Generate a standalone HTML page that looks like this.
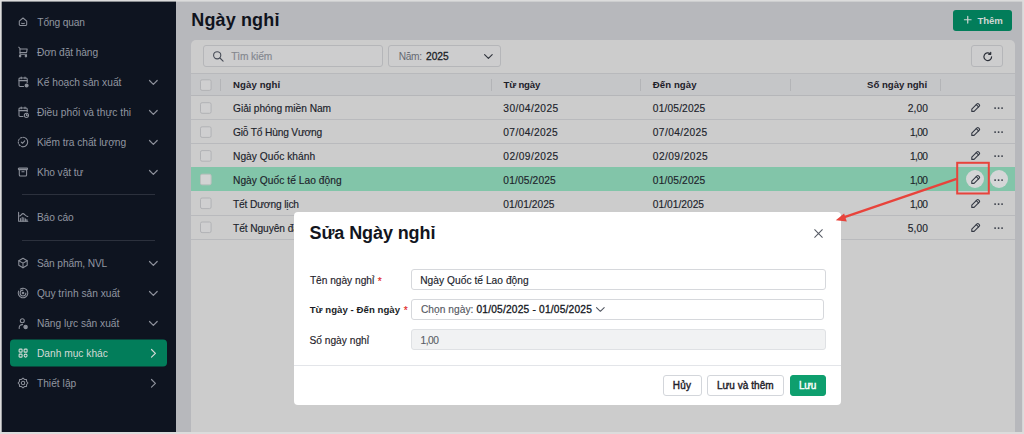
<!DOCTYPE html>
<html lang="vi">
<head>
<meta charset="utf-8">
<title>Ngày nghỉ</title>
<style>
*{box-sizing:border-box;margin:0;padding:0}
html,body{width:1024px;height:434px;overflow:hidden}
body{font-family:"Liberation Sans",sans-serif;font-size:10.2px;color:#1b1e26;background:#b7b8bc;position:relative}
.a{position:absolute}
.t{position:absolute;line-height:16px;white-space:nowrap;font-size:10.2px;color:#20232b;-webkit-text-stroke:.15px}
.edge{position:absolute;background:#dcdcdc}
.side{position:absolute;left:0;top:0;width:176px;height:434px;background:#0e1420}
.sm{color:#9196a0;-webkit-text-stroke:0}
.act{position:absolute;left:10px;top:340px;width:157px;height:26.5px;border-radius:4px;background:#027d5a}
.hr{position:absolute;left:22px;width:133px;height:1px;background:#2c313d}
svg{position:absolute;overflow:visible}
.ic{fill:none;stroke:#8d919b;stroke-width:1.05;stroke-linecap:round;stroke-linejoin:round}
.ch{fill:none;stroke:#8d919b;stroke-width:1.2;stroke-linecap:round;stroke-linejoin:round}
.w{stroke:#d4dad7}
.h1{-webkit-text-stroke:0;font-size:18px;font-weight:bold;line-height:24px;color:#10131c}
.btn-add{position:absolute;left:953px;top:9.5px;width:59px;height:21px;border-radius:3px;background:#027d5a}
.card{position:absolute;left:191px;top:39.5px;width:824px;height:400px;background:#cccccc;border-radius:5px 5px 0 0}
.box{position:absolute;height:21.5px;top:45px;border:1px solid #b5b6b9;border-radius:3px;background:#cdcdce}
.thead{position:absolute;left:191px;top:73px;width:824px;height:23px;background:#c5c6c8;border-top:1px solid #b8b9bc;border-bottom:1px solid #b5b6b9}
.rl{position:absolute;left:191px;width:824px;height:1px;background:#b9babd}
.sel{position:absolute;left:191px;top:167.2px;width:824px;height:23.8px;background:#82c5a9}
.cb{position:absolute;left:200px;width:11.5px;height:11.5px;border:1px solid #b3b4b7;border-radius:2px;background:#cfcfd0}
.sep{position:absolute;top:79px;width:1px;height:12px;background:#b3b4b7}
.hb{font-weight:bold;font-size:9.6px;color:#1d2028;-webkit-text-stroke:0}
.pen{fill:none;stroke:#343944;stroke-width:1.100;stroke-linecap:round;stroke-linejoin:round}
.dots{fill:#343944}
.circ{position:absolute;width:18px;height:18px;border-radius:50%;background:#d5d6d7}
.modal{position:absolute;left:294.3px;top:212.2px;width:546.4px;height:192.8px;background:#fff;border-radius:4px}
.h2{-webkit-text-stroke:0;font-size:18px;font-weight:bold;line-height:24px;color:#12151d}
.lb{color:#1f222a}
.lbb{font-weight:bold;font-size:9.6px;color:#1a1d25;-webkit-text-stroke:0}
.red{color:#e02424}
.fi{position:absolute;left:411px;width:415px;height:21px;border:1px solid #d6d8dc;border-radius:3px;background:#fff}
.dis{background:#f1f2f3;border-color:#dfe1e4}
.mline{position:absolute;left:294.3px;top:364.8px;width:546.4px;height:1px;background:#e3e5e9}
.b{position:absolute;top:375px;height:21px;border:1px solid #d3d6db;border-radius:3px;background:#fff}
.g{background:#0e9f6e;border-color:#0e9f6e}
.bt{font-size:10px;color:#1f222a;-webkit-text-stroke:.4px}
</style>
</head>
<body>
<div class="side"></div>
<svg style="left:0;top:0" width="176" height="434" viewBox="0 0 176 434"><rect x="10" y="339.600" width="157" height="26.800" rx="4" fill="#027d5a"/></svg>
<div class="hr" style="top:194px"></div>
<div class="hr" style="top:240px"></div>

<!-- sidebar icons -->
<svg class="ic" style="left:17.2px;top:15.5px" width="12" height="12" viewBox="0 0 12 12"><path d="M2.300 5.100 6 2l3.700 3.100v3.500a.9.9 0 0 1-.9.9H3.200a.9.9 0 0 1-.9-.9z"/><path d="M4.600 7.300q1.400.8 2.800 0"/></svg>
<svg class="ic" style="left:17.2px;top:46.2px" width="12" height="12" viewBox="0 0 12 12"><path d="M1.700 1.200 3 2.500v5.700h6.600"/><path d="M3 3h7.200l-.600 3.400H3"/><circle cx="3.100" cy="10.100" r=".75"/><circle cx="8.900" cy="10.100" r=".75"/></svg>
<svg class="ic" style="left:17.2px;top:75.7px" width="12" height="12" viewBox="0 0 12 12"><path d="M6.600 10.400H3a1 1 0 0 1-1-1V2.900a1 1 0 0 1 1-1h6.200a1 1 0 0 1 1 1v3.500"/><path d="M2 4.600h8.200M4.200 .9v1.800M8 .9v1.800"/><circle cx="9.600" cy="9.400" r="1.500" fill="#8d919b"/></svg>
<svg class="ic" style="left:17.2px;top:105.7px" width="12" height="12" viewBox="0 0 12 12"><path d="M6 10.400H3a1 1 0 0 1-1-1V2.900a1 1 0 0 1 1-1h6.200a1 1 0 0 1 1 1v2.800"/><path d="M2 4.600h8.200M4.200 .9v1.800M8 .9v1.800"/><circle cx="9.400" cy="9.300" r="2.100"/><path d="M9.400 8.300v1.100h.9"/></svg>
<svg class="ic" style="left:17.2px;top:136.0px" width="12" height="12" viewBox="0 0 12 12"><path d="M6 1.300a4.700 4.700 0 0 1 0 9.400"/><path d="M6 10.700a4.700 4.700 0 0 1 0-9.400" stroke-dasharray="1.500 1.450"/><path d="M4.300 6.100l1.200 1.200 2.200-2.400"/></svg>
<svg class="ic" style="left:17.2px;top:166.3px" width="12" height="12" viewBox="0 0 12 12"><rect x="1.400" y="2.100" width="9.100" height="1.500" rx=".5"/><path d="M2.300 3.700V9a1 1 0 0 0 1 1h5.300a1 1 0 0 0 1-1V3.700"/><path d="M4.900 5.800h2.200"/></svg>
<svg class="ic" style="left:17.2px;top:211.0px" width="12" height="12" viewBox="0 0 12 12"><path d="M1.600 1.200v9.100h9.200"/><path d="M2.600 5c1.400-.4 2-2.400 3.400-2.400s2.600 2.800 4.800 3"/><path d="M3.600 10V7.400M5.200 10V6.200M6.800 10V6.800M8.400 10V7.800M9.900 10V8.400"/></svg>
<svg class="ic" style="left:17.2px;top:257.4px" width="12" height="12" viewBox="0 0 12 12"><path d="M6 1.300l4.200 2.400v4.600L6 10.700 1.800 8.300V3.700z"/><path d="M1.800 3.700 6 6.100l4.200-2.400M6 6.100v4.600"/></svg>
<svg class="ic" style="left:17.2px;top:287.4px" width="12" height="12" viewBox="0 0 12 12"><path d="M6 1.200a4.800 4.800 0 1 1-4.400 2.900"/><path d="M8.900 6A2.900 2.900 0 1 1 6 3.100"/><circle cx="6" cy="6" r=".8"/><path d="M3.300 2.100a4.800 4.800 0 0 1 2.700-.9"/></svg>
<svg class="ic" style="left:17.2px;top:317.8px" width="12" height="12" viewBox="0 0 12 12"><circle cx="5.300" cy="2.800" r="2"/><path d="M2.200 10.400v-.8a3 3 0 0 1 3-3h.4"/><circle cx="8.600" cy="8.900" r="1.700" fill="#8d919b"/></svg>
<svg class="ic w" style="left:17.2px;top:347.2px" width="12" height="12" viewBox="0 0 12 12"><rect x="2.100" y="2.100" width="3" height="3" rx=".7"/><rect x="7.100" y="2.100" width="3" height="3" rx=".7"/><rect x="2.100" y="7.100" width="3" height="3" rx=".7"/><rect x="7.100" y="7.100" width="3" height="3" rx="1.500"/></svg>
<svg class="ic" style="left:17.2px;top:377.1px" width="12" height="12" viewBox="0 0 12 12"><path d="M6.00 1.10 L7.49 2.40 L9.46 2.54 L9.60 4.51 L10.90 6.00 L9.60 7.49 L9.46 9.46 L7.49 9.60 L6.00 10.90 L4.51 9.60 L2.54 9.46 L2.40 7.49 L1.10 6.00 L2.40 4.51 L2.54 2.54 L4.51 2.40z"/><circle cx="6" cy="6" r="1.700"/></svg>

<!-- sidebar chevrons -->
<svg class="ch" style="left:149.400px;top:79.800px" width="8.700" height="5" viewBox="0 0 8.700 5"><path d="M.5 .5l3.850 3.900L8.200 .5"/></svg>
<svg class="ch" style="left:149.400px;top:109.800px" width="8.700" height="5" viewBox="0 0 8.700 5"><path d="M.5 .5l3.850 3.900L8.200 .5"/></svg>
<svg class="ch" style="left:149.400px;top:139.800px" width="8.700" height="5" viewBox="0 0 8.700 5"><path d="M.5 .5l3.850 3.900L8.200 .5"/></svg>
<svg class="ch" style="left:149.400px;top:169.800px" width="8.700" height="5" viewBox="0 0 8.700 5"><path d="M.5 .5l3.850 3.900L8.200 .5"/></svg>
<svg class="ch" style="left:149.400px;top:261.300px" width="8.700" height="5" viewBox="0 0 8.700 5"><path d="M.5 .5l3.850 3.900L8.200 .5"/></svg>
<svg class="ch" style="left:149.400px;top:291.300px" width="8.700" height="5" viewBox="0 0 8.700 5"><path d="M.5 .5l3.850 3.900L8.200 .5"/></svg>
<svg class="ch" style="left:149.400px;top:321.300px" width="8.700" height="5" viewBox="0 0 8.700 5"><path d="M.5 .5l3.850 3.900L8.200 .5"/></svg>
<svg class="ch w" style="left:151.300px;top:349.200px" width="5" height="8.700" viewBox="0 0 5 8.700"><path d="M.5 .5l3.900 3.850L.5 8.200"/></svg>
<svg class="ch" style="left:151.300px;top:379.200px" width="5" height="8.700" viewBox="0 0 5 8.700"><path d="M.5 .5l3.900 3.850L.5 8.200"/></svg>

<span id="t0" class="t sm" style="left:37.3px;top:15.3px;letter-spacing:-0.127px;">Tổng quan</span>
<span id="t1" class="t sm" style="left:36.9px;top:45.0px;letter-spacing:-0.091px;">Đơn đặt hàng</span>
<span id="t2" class="t sm" style="left:36.9px;top:75.0px;letter-spacing:0.007px;">Kế hoạch sản xuất</span>
<span id="t3" class="t sm" style="left:36.9px;top:105.0px;letter-spacing:0.037px;">Điều phối và thực thi</span>
<span id="t4" class="t sm" style="left:36.9px;top:135.0px;letter-spacing:-0.042px;">Kiểm tra chất lượng</span>
<span id="t5" class="t sm" style="left:36.9px;top:165.0px;letter-spacing:-0.059px;">Kho vật tư</span>
<span id="t6" class="t sm" style="left:36.9px;top:210.1px;letter-spacing:-0.098px;">Báo cáo</span>
<span id="t7" class="t sm" style="left:36.9px;top:256.1px;letter-spacing:-0.127px;">Sản phẩm, NVL</span>
<span id="t8" class="t sm" style="left:36.9px;top:286.1px;letter-spacing:-0.015px;">Quy trình sản xuất</span>
<span id="t9" class="t sm" style="left:36.9px;top:316.1px;letter-spacing:-0.020px;">Năng lực sản xuất</span>
<span id="t10" class="t sm" style="left:36.9px;top:345.8px;letter-spacing:0.018px;color:#d4dad7;">Danh mục khác</span>
<span id="t11" class="t sm" style="left:36.9px;top:375.8px;letter-spacing:0.040px;">Thiết lập</span>

<!-- main header -->
<span id="t12" class="t h1" style="left:191.3px;top:11.5px;letter-spacing:0.136px;margin-top:-4px;">Ngày nghỉ</span>
<div class="btn-add"></div>
<svg style="left:964px;top:16.200px" width="7.500" height="7.500" viewBox="0 0 7.500 7.500" fill="none" stroke="#cfd6d3" stroke-width="1.200" stroke-linecap="round"><path d="M3.750 .400v6.700M.400 3.750h6.700"/></svg>
<span id="t13" class="t hb" style="left:977.4px;top:12.8px;letter-spacing:-0.065px;color:#cfd6d3;">Thêm</span>

<div class="card"></div>
<div class="box" style="left:203px;width:180px"></div>
<svg style="left:213.300px;top:50.600px" width="11" height="11" viewBox="0 0 11 11" fill="none" stroke="#474c57" stroke-width="1.100" stroke-linecap="round"><circle cx="4.200" cy="4.300" r="3.600"/><path d="M6.900 7l3.200 3.200"/></svg>
<span id="t14" class="t" style="left:231.2px;top:49.2px;letter-spacing:-0.127px;color:#84878e;">Tìm kiếm</span>
<div class="box" style="left:388.300px;width:112.500px"></div>
<span id="t15" class="t" style="left:398.8px;top:49.2px;letter-spacing:-0.381px;color:#666a72;-webkit-text-stroke:0;">Năm:</span>
<span id="t16" class="t" style="left:425.9px;top:49.2px;letter-spacing:0.076px;color:#1b1e26;-webkit-text-stroke:.3px;">2025</span>
<svg style="left:483.600px;top:53.700px" width="8.800" height="5" viewBox="0 0 8.800 5" fill="none" stroke="#2f333c" stroke-width="1.150" stroke-linecap="round" stroke-linejoin="round"><path d="M.600 .600l3.800 3.700L8.200 .600"/></svg>
<div class="box" style="left:971px;width:32px"></div>
<svg style="left:982.500px;top:51.500px" width="9.500" height="9.500" viewBox="0 0 9.500 9.500" fill="none" stroke="#2b2f38" stroke-width="1.200" stroke-linecap="round" stroke-linejoin="round"><path d="M8.600 4.750A3.850 3.850 0 1 1 7.300 1.860"/><path d="M7.700 .300v2H5.700"/></svg>

<div class="thead"></div>
<div class="sep" style="left:219.500px"></div>
<div class="sep" style="left:490.500px"></div>
<div class="sep" style="left:640.400px"></div>
<div class="sep" style="left:790.400px"></div>
<div class="sep" style="left:939.800px"></div>
<span id="t17" class="t hb" style="left:233.0px;top:77.3px;letter-spacing:0.103px;">Ngày nghỉ</span>
<span id="t18" class="t hb" style="left:503.5px;top:77.3px;letter-spacing:-0.179px;">Từ ngày</span>
<span id="t19" class="t hb" style="left:652.8px;top:77.3px;letter-spacing:0.073px;">Đến ngày</span>
<span id="t20" class="t hb" style="left:867.1px;top:77.3px;letter-spacing:-0.021px;">Số ngày nghỉ</span>

<div class="sel"></div>
<div class="rl" style="top:119px"></div>
<div class="rl" style="top:143px"></div>
<div class="rl" style="top:215px"></div>
<div class="rl" style="top:239px"></div>

<svg style="left:0;top:0" width="240" height="240" viewBox="0 0 240 240"><rect x="200.500" y="79.8" width="10.600" height="10.600" rx="1.600" fill="#cfcfd0" stroke="#b1b2b5"/><rect x="200.500" y="102.7" width="10.600" height="10.600" rx="1.600" fill="#cfcfd0" stroke="#b1b2b5"/><rect x="200.500" y="126.8" width="10.600" height="10.600" rx="1.600" fill="#cfcfd0" stroke="#b1b2b5"/><rect x="200.500" y="150.6" width="10.600" height="10.600" rx="1.600" fill="#cfcfd0" stroke="#b1b2b5"/><rect x="200.500" y="174.2" width="10.600" height="10.600" rx="1.600" fill="#d2d3d3" stroke="#bcbfbe"/><rect x="200.500" y="198.0" width="10.600" height="10.600" rx="1.600" fill="#cfcfd0" stroke="#b1b2b5"/><rect x="200.500" y="222.0" width="10.600" height="10.600" rx="1.600" fill="#cfcfd0" stroke="#b1b2b5"/></svg>
<span id="t21" class="t" style="left:233.0px;top:100.7px;letter-spacing:-0.024px;">Giải phóng miền Nam</span>
<span id="t22" class="t" style="left:503.3px;top:100.7px;letter-spacing:0.433px;">30/04/2025</span>
<span id="t23" class="t" style="left:652.8px;top:100.7px;letter-spacing:0.167px;">01/05/2025</span>
<span id="t24" class="t" style="left:907.7px;top:100.7px;letter-spacing:0.124px;">2,00</span>
<span id="t25" class="t" style="left:233.0px;top:124.7px;letter-spacing:-0.177px;">Giỗ Tổ Hùng Vương</span>
<span id="t26" class="t" style="left:503.3px;top:124.7px;letter-spacing:0.389px;">07/04/2025</span>
<span id="t27" class="t" style="left:652.8px;top:124.7px;letter-spacing:0.389px;">07/04/2025</span>
<span id="t28" class="t" style="left:909.9px;top:124.7px;letter-spacing:-0.609px;">1,00</span>
<span id="t29" class="t" style="left:233.0px;top:148.7px;letter-spacing:0.038px;">Ngày Quốc khánh</span>
<span id="t30" class="t" style="left:503.3px;top:148.7px;letter-spacing:0.433px;">02/09/2025</span>
<span id="t31" class="t" style="left:652.8px;top:148.7px;letter-spacing:0.433px;">02/09/2025</span>
<span id="t32" class="t" style="left:909.9px;top:148.7px;letter-spacing:-0.609px;">1,00</span>
<span id="t33" class="t" style="left:233.0px;top:172.7px;letter-spacing:0.049px;">Ngày Quốc tế Lao động</span>
<span id="t34" class="t" style="left:503.3px;top:172.7px;letter-spacing:0.167px;">01/05/2025</span>
<span id="t35" class="t" style="left:652.8px;top:172.7px;letter-spacing:0.167px;">01/05/2025</span>
<span id="t36" class="t" style="left:909.9px;top:172.7px;letter-spacing:-0.609px;">1,00</span>
<span id="t37" class="t" style="left:233.0px;top:196.7px;letter-spacing:-0.143px;">Tết Dương lịch</span>
<span id="t38" class="t" style="left:503.3px;top:196.7px;letter-spacing:0.022px;">01/01/2025</span>
<span id="t39" class="t" style="left:652.8px;top:196.7px;letter-spacing:0.022px;">01/01/2025</span>
<span id="t40" class="t" style="left:909.9px;top:196.7px;letter-spacing:-0.609px;">1,00</span>
<span id="t41" class="t" style="left:233.0px;top:220.7px;letter-spacing:-0.077px;">Tết Nguyên đán</span>
<span id="t42" class="t" style="left:503.3px;top:220.7px;letter-spacing:0.300px;">28/01/2025</span>
<span id="t43" class="t" style="left:652.8px;top:220.7px;letter-spacing:0.244px;">01/02/2025</span>
<span id="t44" class="t" style="left:907.7px;top:220.7px;letter-spacing:0.124px;">5,00</span>

<!-- action icons -->
<div class="circ" style="left:965.500px;top:170.400px"></div>
<div class="circ" style="left:989.700px;top:170.400px"></div>


<svg class="pen" style="left:970.800px;top:103.1px" width="9.200" height="9.200" viewBox="0 0 9.200 9.200"><path d="M6 .900a1.100 1.100 0 0 1 1.550 0l.750 .750a1.100 1.100 0 0 1 0 1.550L3.100 8.400H.800V6.100z"/><path d="M5.300 1.600l2.300 2.300"/></svg>
<svg class="dots" style="left:994px;top:106.6px" width="9.200" height="2.200" viewBox="0 0 9.200 2.200"><circle cx="1.100" cy="1.100" r=".95"/><circle cx="4.600" cy="1.100" r=".95"/><circle cx="8.100" cy="1.100" r=".95"/></svg>
<svg class="pen" style="left:970.800px;top:127.1px" width="9.200" height="9.200" viewBox="0 0 9.200 9.200"><path d="M6 .900a1.100 1.100 0 0 1 1.550 0l.750 .750a1.100 1.100 0 0 1 0 1.550L3.100 8.400H.800V6.100z"/><path d="M5.300 1.600l2.300 2.300"/></svg>
<svg class="dots" style="left:994px;top:130.6px" width="9.200" height="2.200" viewBox="0 0 9.200 2.200"><circle cx="1.100" cy="1.100" r=".95"/><circle cx="4.600" cy="1.100" r=".95"/><circle cx="8.100" cy="1.100" r=".95"/></svg>
<svg class="pen" style="left:970.800px;top:151.1px" width="9.200" height="9.200" viewBox="0 0 9.200 9.200"><path d="M6 .900a1.100 1.100 0 0 1 1.550 0l.750 .750a1.100 1.100 0 0 1 0 1.550L3.100 8.400H.800V6.100z"/><path d="M5.300 1.600l2.300 2.300"/></svg>
<svg class="dots" style="left:994px;top:154.6px" width="9.200" height="2.200" viewBox="0 0 9.200 2.200"><circle cx="1.100" cy="1.100" r=".95"/><circle cx="4.600" cy="1.100" r=".95"/><circle cx="8.100" cy="1.100" r=".95"/></svg>
<svg class="pen" style="left:970.800px;top:175.0px" width="9.200" height="9.200" viewBox="0 0 9.200 9.200"><path d="M6 .900a1.100 1.100 0 0 1 1.550 0l.750 .750a1.100 1.100 0 0 1 0 1.550L3.100 8.400H.800V6.100z"/><path d="M5.300 1.600l2.300 2.300"/></svg>
<svg class="dots" style="left:994px;top:178.5px" width="9.200" height="2.200" viewBox="0 0 9.200 2.200"><circle cx="1.100" cy="1.100" r=".95"/><circle cx="4.600" cy="1.100" r=".95"/><circle cx="8.100" cy="1.100" r=".95"/></svg>
<svg class="pen" style="left:970.800px;top:199.1px" width="9.200" height="9.200" viewBox="0 0 9.200 9.200"><path d="M6 .900a1.100 1.100 0 0 1 1.550 0l.750 .750a1.100 1.100 0 0 1 0 1.550L3.100 8.400H.800V6.100z"/><path d="M5.300 1.600l2.300 2.300"/></svg>
<svg class="dots" style="left:994px;top:202.6px" width="9.200" height="2.200" viewBox="0 0 9.200 2.200"><circle cx="1.100" cy="1.100" r=".95"/><circle cx="4.600" cy="1.100" r=".95"/><circle cx="8.100" cy="1.100" r=".95"/></svg>
<svg class="pen" style="left:970.800px;top:223.1px" width="9.200" height="9.200" viewBox="0 0 9.200 9.200"><path d="M6 .900a1.100 1.100 0 0 1 1.550 0l.750 .750a1.100 1.100 0 0 1 0 1.550L3.100 8.400H.800V6.100z"/><path d="M5.300 1.600l2.300 2.300"/></svg>
<svg class="dots" style="left:994px;top:226.6px" width="9.200" height="2.200" viewBox="0 0 9.200 2.200"><circle cx="1.100" cy="1.100" r=".95"/><circle cx="4.600" cy="1.100" r=".95"/><circle cx="8.100" cy="1.100" r=".95"/></svg>

<!-- modal -->
<div class="modal"></div>
<span id="t45" class="t h2" style="left:309.5px;top:224.8px;letter-spacing:-0.097px;margin-top:-4px;">Sửa Ngày nghỉ</span>
<svg style="left:814.300px;top:229.200px" width="9" height="9" viewBox="0 0 9 9" fill="none" stroke="#555a64" stroke-width="1.050" stroke-linecap="round"><path d="M.700 .700l7.600 7.600M8.300 .700L.700 8.300"/></svg>
<div class="fi" style="top:269px"></div>
<div class="fi" style="top:299px;width:413px"></div>
<div class="fi dis" style="top:329px"></div>
<span id="t46" class="t lb" style="left:309.9px;top:272.8px;letter-spacing:-0.023px;">Tên ngày nghỉ</span>
<span id="t47" class="t red" style="left:377.7px;top:273.8px;">*</span>
<span id="t48" class="t lbb" style="left:309.7px;top:302.2px;letter-spacing:0.048px;">Từ ngày - Đến ngày</span>
<span id="t49" class="t red" style="left:403.7px;top:303.3px;">*</span>
<span id="t50" class="t lb" style="left:309.5px;top:332.7px;">Số ngày nghỉ</span>
<span id="t51" class="t" style="left:420.2px;top:272.7px;letter-spacing:0.044px;">Ngày Quốc tế Lao động</span>
<span id="t52" class="t" style="left:420.9px;top:302.2px;letter-spacing:0.043px;color:#555962;">Chọn ngày:</span>
<span id="t53" class="t" style="left:476.5px;top:302.2px;letter-spacing:0.194px;color:#14171e;-webkit-text-stroke:.3px;">01/05/2025 - 01/05/2025</span>
<svg style="left:596px;top:307.300px" width="8.700" height="5" viewBox="0 0 8.700 5" fill="none" stroke="#4f545e" stroke-width="1.050" stroke-linecap="round" stroke-linejoin="round"><path d="M.500 .500l3.850 3.800L8.200 .500"/></svg>
<span id="t54" class="t" style="left:420.5px;top:332.6px;letter-spacing:-0.443px;color:#5b5f67;">1,00</span>
<div class="mline"></div>
<div class="b" style="left:663.200px;width:38.600px"></div>
<div class="b" style="left:707.200px;width:76.400px"></div>
<div class="b g" style="left:789.700px;width:36px"></div>
<span id="t55" class="t bt" style="left:672.7px;top:378.2px;letter-spacing:0.302px;">Hủy</span>
<span id="t56" class="t bt" style="left:716.9px;top:378.2px;letter-spacing:0.053px;">Lưu và thêm</span>
<span id="t57" class="t bt" style="left:799.0px;top:378.2px;letter-spacing:-0.314px;color:#fff;">Lưu</span>

<!-- annotation -->
<svg style="left:0;top:0" width="1024" height="434" viewBox="0 0 1024 434"><rect x="957.200" y="162.800" width="31.600" height="30.700" fill="none" stroke="#e8433b" stroke-width="2"/><path d="M956.700 178.800L843 217.700" stroke="#e8433b" stroke-width="2.300" fill="none"/><path d="M835.800 220.200l8.300-6.700 2.700 8z" fill="#e8433b"/></svg>

<!-- frame edges -->
<div class="edge" style="left:0;top:1px;width:1024px;height:1px;opacity:.6"></div>
<div class="edge" style="left:1px;top:0;width:1px;height:434px;opacity:.7"></div>
<div class="edge" style="left:1022px;top:0;width:1px;height:434px;opacity:.8"></div>
<div class="edge" style="left:0;top:0;width:1024px;height:1px"></div>
<div class="edge" style="left:0;top:432px;width:1024px;height:2px"></div>
<div class="edge" style="left:0;top:0;width:1px;height:434px"></div>
<div class="edge" style="left:1023px;top:0;width:1px;height:434px"></div>
</body>
</html>
